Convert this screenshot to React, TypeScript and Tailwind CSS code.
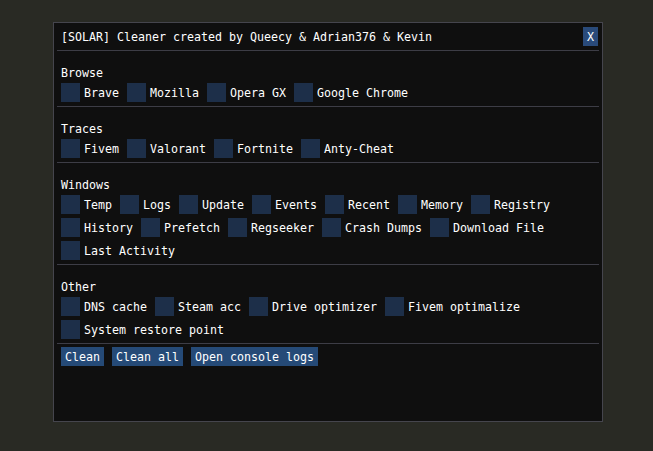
import React, { useState } from "react";

type Section = {
  title: string;
  rows: string[][];
};

const sections: Section[] = [
  { title: "Browse", rows: [["Brave", "Mozilla", "Opera GX", "Google Chrome"]] },
  { title: "Traces", rows: [["Fivem", "Valorant", "Fortnite", "Anty-Cheat"]] },
  {
    title: "Windows",
    rows: [
      ["Temp", "Logs", "Update", "Events", "Recent", "Memory", "Registry"],
      ["History", "Prefetch", "Regseeker", "Crash Dumps", "Download File"],
      ["Last Activity"],
    ],
  },
  {
    title: "Other",
    rows: [
      ["DNS cache", "Steam acc", "Drive optimizer", "Fivem optimalize"],
      ["System restore point"],
    ],
  },
];

const Separator: React.FC<{ className?: string }> = ({ className = "" }) => (
  <div className={`h-px bg-[#3d3d46] -mx-[4px] ${className}`} />
);

const Checkbox: React.FC<{ label: string; checked: boolean; onToggle: () => void }> = ({
  label,
  checked,
  onToggle,
}) => (
  <button type="button" onClick={onToggle} className="flex items-center h-[19px] gap-[4px] cursor-default">
    <span className="w-[19px] h-[19px] bg-[#1d2f49] flex items-center justify-center">
      {checked && (
        <svg width="11" height="11" viewBox="0 0 11 11">
          <path d="M1 5.5 L4 8.5 L10 2" stroke="#4296fa" strokeWidth="2" fill="none" />
        </svg>
      )}
    </span>
    <span className="whitespace-pre translate-y-[1px]">{label}</span>
  </button>
);

export default function App() {
  const [checked, setChecked] = useState<Record<string, boolean>>({});

  const toggle = (key: string) => setChecked((prev) => ({ ...prev, [key]: !prev[key] }));

  return (
    <div className="w-[653px] h-[451px] bg-[#292a24] pt-[22px] pl-[53px] overflow-hidden">
      <div className="w-[550px] h-[400px] border border-[#45454d] bg-[#0f0f0f] px-[7px] pt-[4px] text-white font-['DejaVu_Sans_Mono',monospace] text-[11.63px] leading-[13px]">
        {/* title row */}
        <div className="flex items-center justify-between h-[19px]">
          <span className="whitespace-pre translate-y-[1px]">[SOLAR] Cleaner created by Queecy &amp; Adrian376 &amp; Kevin</span>
          <button type="button" className="h-[19px] w-[15px] -mr-[3px] bg-[#294a7a] flex items-center justify-center">
            <span className="translate-y-[1px]">X</span>
          </button>
        </div>
        <Separator className="mt-[4px]" />

        {sections.map((section) => (
          <div key={section.title}>
            <div className="mt-[15px] h-[13px]">
              <span className="inline-block translate-y-[1px]">{section.title}</span>
            </div>
            <div className="mt-[4px] flex flex-col gap-[4px]">
              {section.rows.map((row, i) => (
                <div key={i} className="flex gap-[8px]">
                  {row.map((item) => {
                    const key = `${section.title}-${item}`;
                    return (
                      <Checkbox key={key} label={item} checked={!!checked[key]} onToggle={() => toggle(key)} />
                    );
                  })}
                </div>
              ))}
            </div>
            <Separator className="mt-[4px]" />
          </div>
        ))}

        <div className="mt-[3px] flex gap-[8px]">
          {["Clean", "Clean all", "Open console logs"].map((b) => (
            <button
              key={b}
              type="button"
              className="h-[19px] px-[4px] bg-[#254a77] whitespace-pre flex items-center"
            >
              <span className="translate-y-[1px]">{b}</span>
            </button>
          ))}
        </div>
      </div>
    </div>
  );
}
